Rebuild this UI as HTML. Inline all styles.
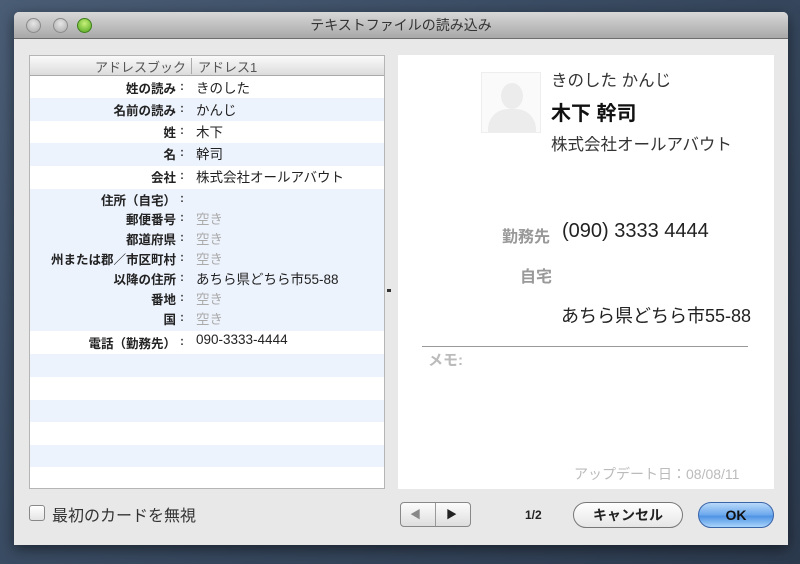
<!DOCTYPE html>
<html><head><meta charset="utf-8"><style>
*{margin:0;padding:0;box-sizing:border-box}
body{width:800px;height:564px;overflow:hidden;background:linear-gradient(135deg,#4a5d75 0%,#3a4c63 40%,#2c3a4e 100%);font-family:"Liberation Sans","Noto Sans CJK JP",sans-serif;position:relative}
.win{position:absolute;left:14px;top:12px;width:774px;height:533px;background:#e8e8e8;border-radius:5px 5px 0 0;box-shadow:0 4px 14px rgba(0,0,0,.5)}
.title{position:absolute;left:0;top:0;width:774px;height:27px;background:linear-gradient(#d8d8d8,#a8a8a8);border-radius:5px 5px 0 0;border-bottom:1px solid #6e6e6e;text-align:center;font-size:14px;line-height:27px;color:#333}
.btn{position:absolute;top:6px;width:15px;height:15px;border-radius:50%;background:radial-gradient(circle at 50% 35%,#e6e6e6,#a9a9a9);border:1px solid #8a8a8a}
.a{position:absolute;font-size:12px;color:#222;white-space:nowrap}
.tbl{position:absolute;left:29px;top:55px;width:356px;height:434px;background:#fff;border:1px solid #b5b5b5;overflow:hidden}
.row{position:absolute;left:0;width:356px}
.b{background:#edf3fd}
.lab{position:absolute;right:-147px;font-size:12.5px;font-weight:bold;color:#222;white-space:nowrap}
.col{position:absolute;left:151px;font-size:12px;font-weight:bold;color:#444}
.val{position:absolute;left:167px;font-size:13.5px;color:#222;white-space:nowrap}
.e{color:#aaa}
.card{position:absolute;left:398px;top:55px;width:376px;height:434px;background:#fff}
</style></head><body>
<div class="win">
<div class="title">テキストファイルの読み込み</div>
<div class="btn" style="left:12px"></div>
<div class="btn" style="left:39px"></div>
<div class="btn" style="left:63px;background:radial-gradient(circle at 50% 35%,#c8f07a,#4ea51c);border-color:#3f7d1d"></div>
</div>
<div class="tbl">
<div class="row" style="top:0;height:20px;background:linear-gradient(#fafafa,#dcdcdc);border-bottom:1px solid #aaa"></div>
<div style="position:absolute;left:161px;top:2px;width:1px;height:16px;background:#aaa"></div>
<div class="a" style="right:198px;top:1px;color:#555;font-size:13px">アドレスブック</div>
<div class="a" style="left:168px;top:1px;color:#555;font-size:13px">アドレス1</div>
<div class="row b" style="top:42px;height:23px"></div>
<div class="row b" style="top:87px;height:23px"></div>
<div class="row b" style="top:133px;height:142px"></div>
<div class="row b" style="top:298px;height:23px"></div>
<div class="row b" style="top:344px;height:22px"></div>
<div class="row b" style="top:389px;height:22px"></div>
</div>
<div style="position:absolute;left:29px;top:55px">
<div class="lab" style="top:23px">姓の読み</div><div class="col" style="top:24px">:</div><div class="val" style="top:22px">きのした</div>
<div class="lab" style="top:45px">名前の読み</div><div class="col" style="top:46px">:</div><div class="val" style="top:44px">かんじ</div>
<div class="lab" style="top:67px">姓</div><div class="col" style="top:68px">:</div><div class="val" style="top:66px">木下</div>
<div class="lab" style="top:89px">名</div><div class="col" style="top:90px">:</div><div class="val" style="top:88px">幹司</div>
<div class="lab" style="top:112px">会社</div><div class="col" style="top:113px">:</div><div class="val" style="top:111px">株式会社オールアバウト</div>
<div class="lab" style="top:135px">住所（自宅）</div><div class="col" style="top:136px">:</div>
<div class="lab" style="top:154px">郵便番号</div><div class="col" style="top:155px">:</div><div class="val e" style="top:153px">空き</div>
<div class="lab" style="top:174px">都道府県</div><div class="col" style="top:175px">:</div><div class="val e" style="top:173px">空き</div>
<div class="lab" style="top:194px">州または郡／市区町村</div><div class="col" style="top:195px">:</div><div class="val e" style="top:193px">空き</div>
<div class="lab" style="top:214px">以降の住所</div><div class="col" style="top:215px">:</div><div class="val" style="top:213px">あちら県どちら市55-88</div>
<div class="lab" style="top:234px">番地</div><div class="col" style="top:235px">:</div><div class="val e" style="top:233px">空き</div>
<div class="lab" style="top:254px">国</div><div class="col" style="top:255px">:</div><div class="val e" style="top:253px">空き</div>
<div class="lab" style="top:278px">電話（勤務先）</div><div class="col" style="top:279px">:</div><div class="val" style="top:277px">090-3333-4444</div>
</div>
<div class="card">
<div style="position:absolute;left:83px;top:17px;width:60px;height:61px;border:1px solid #eee;background:#fafafa;overflow:hidden">
<div style="position:absolute;left:19px;top:10px;width:22px;height:26px;border-radius:50%;background:#ececec"></div>
<div style="position:absolute;left:6px;top:36px;width:48px;height:30px;border-radius:20px 20px 0 0;background:#ececec"></div></div>
<div class="a" style="left:153px;top:12px;font-size:16.5px;color:#333">きのした かんじ</div>
<div class="a" style="left:153px;top:42px;font-size:20px;font-weight:bold;color:#111">木下 幹司</div>
<div class="a" style="left:153px;top:76px;font-size:16.5px;color:#333">株式会社オールアバウト</div>
<div class="a" style="left:104px;top:168px;font-size:16px;color:#999;font-weight:bold">勤務先</div>
<div class="a" style="left:164px;top:165px;font-size:20px;color:#222">(090) 3333 4444</div>
<div class="a" style="left:122px;top:208px;font-size:16px;color:#999;font-weight:bold">自宅</div>
<div class="a" style="left:163px;top:247px;font-size:18px;color:#222">あちら県どちら市55-88</div>
<div style="position:absolute;left:24px;top:291px;width:326px;height:1px;background:#999"></div>
<div class="a" style="left:30px;top:294px;font-size:15px;color:#bbb;font-weight:bold">メモ:</div>
<div class="a" style="left:176px;top:409px;font-size:14px;color:#bbb">アップデート日：08/08/11</div>
</div>
<div style="position:absolute;left:387px;top:289px;width:4px;height:3px;background:#333"></div>
<div style="position:absolute;left:29px;top:505px;width:16px;height:16px;border:1px solid #888;border-radius:3px;background:linear-gradient(#fff,#e4e4e4)"></div>
<div class="a" style="left:52px;top:502px;font-size:16px;color:#333">最初のカードを無視</div>
<div style="position:absolute;left:400px;top:502px;width:71px;height:25px;border:1px solid #888;border-radius:4px;background:linear-gradient(#fcfcfc,#dedede)"></div>
<div style="position:absolute;left:435px;top:503px;width:1px;height:23px;background:#999"></div>
<div class="a" style="left:410px;top:506px;font-size:11px;color:#888">◀</div>
<div class="a" style="left:446px;top:506px;font-size:11px;color:#222">▶</div>
<div class="a" style="left:525px;top:508px;font-size:12px;color:#222;font-weight:bold">1/2</div>
<div style="position:absolute;left:573px;top:502px;width:110px;height:26px;border:1px solid #777;border-radius:13px;background:linear-gradient(#fff,#e6e6e6);text-align:center;font-size:14px;line-height:24px;color:#222;font-weight:bold">キャンセル</div>
<div style="position:absolute;left:698px;top:502px;width:76px;height:26px;border:1px solid #3a64a8;border-radius:13px;background:linear-gradient(#b9d9fa,#6aa8ec 50%,#4f93e4 55%,#a8d4fb);text-align:center;font-size:14px;line-height:24px;color:#111;font-weight:bold">OK</div>
</body></html>
